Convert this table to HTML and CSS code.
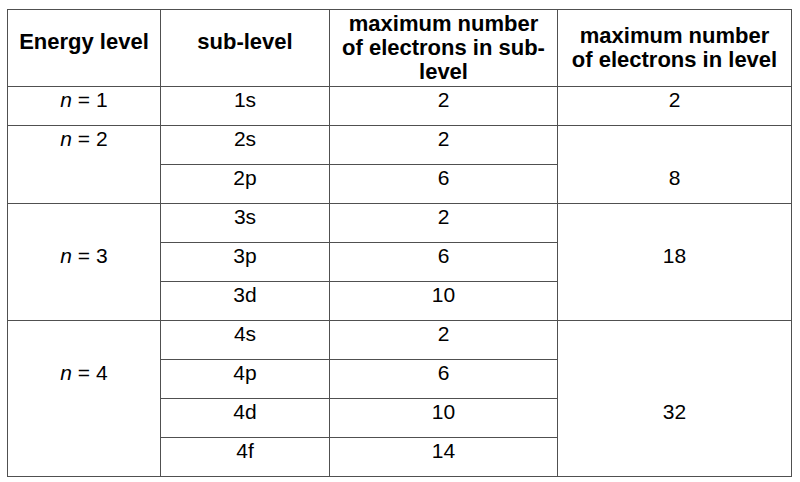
FILE: index.html
```html
<!DOCTYPE html>
<html>
<head>
<meta charset="utf-8">
<link rel="stylesheet" href="styles.css">
</head>
<body>
<div class="page">
<table class="levels">
  <colgroup>
    <col class="c1"><col class="c2"><col class="c3"><col class="c4">
  </colgroup>
  <thead>
    <tr class="head">
      <th class="single">Energy level</th>
      <th class="single">sub-level</th>
      <th>maximum number<br>of electrons in sub-<br>level</th>
      <th>maximum number<br>of electrons in level</th>
    </tr>
  </thead>
  <tbody>
    <tr class="row">
      <td><i>n</i> = 1</td><td>1s</td><td>2</td><td>2</td>
    </tr>
    <tr class="row">
      <td rowspan="2"><i>n</i> = 2</td><td>2s</td><td>2</td><td rowspan="2" class="skip1">8</td>
    </tr>
    <tr class="row">
      <td>2p</td><td>6</td>
    </tr>
    <tr class="row">
      <td rowspan="3" class="skip1"><i>n</i> = 3</td><td>3s</td><td>2</td><td rowspan="3" class="skip1">18</td>
    </tr>
    <tr class="row">
      <td>3p</td><td>6</td>
    </tr>
    <tr class="row">
      <td>3d</td><td>10</td>
    </tr>
    <tr class="row">
      <td rowspan="4" class="skip1"><i>n</i> = 4</td><td>4s</td><td>2</td><td rowspan="4" class="skip2">32</td>
    </tr>
    <tr class="row">
      <td>4p</td><td>6</td>
    </tr>
    <tr class="row">
      <td>4d</td><td>10</td>
    </tr>
    <tr class="row">
      <td>4f</td><td>14</td>
    </tr>
  </tbody>
</table>
</div>
</body>
</html>
```
FILE: styles.css
```css
html, body {
  margin: 0;
  padding: 0;
  background: #ffffff;
}

.page {
  padding: 9px 0 0 7px;
}

.levels {
  border-collapse: collapse;
  table-layout: fixed;
  width: 784px;
  font-family: "Liberation Sans", Arial, sans-serif;
  color: #000;
}

.c1 { width: 153px; }
.c2 { width: 169px; }
.c3 { width: 228px; }
.c4 { width: 234px; }

.levels th,
.levels td {
  border: 1px solid #505050;
  text-align: center;
  padding: 0 6px;
}

.levels th {
  font-size: 22px;
  font-weight: bold;
  line-height: 24px;
  vertical-align: middle;
  white-space: nowrap;
}

.levels th.single {
  padding-bottom: 13px;
}

.head {
  height: 77px;
}

.row {
  height: 39px;
}

.levels td {
  font-size: 21px;
  line-height: 23px;
  vertical-align: top;
  padding-top: 1px;
}

.levels td.skip1 {
  padding-top: 40px;
}

.levels td.skip2 {
  padding-top: 79px;
}
```
